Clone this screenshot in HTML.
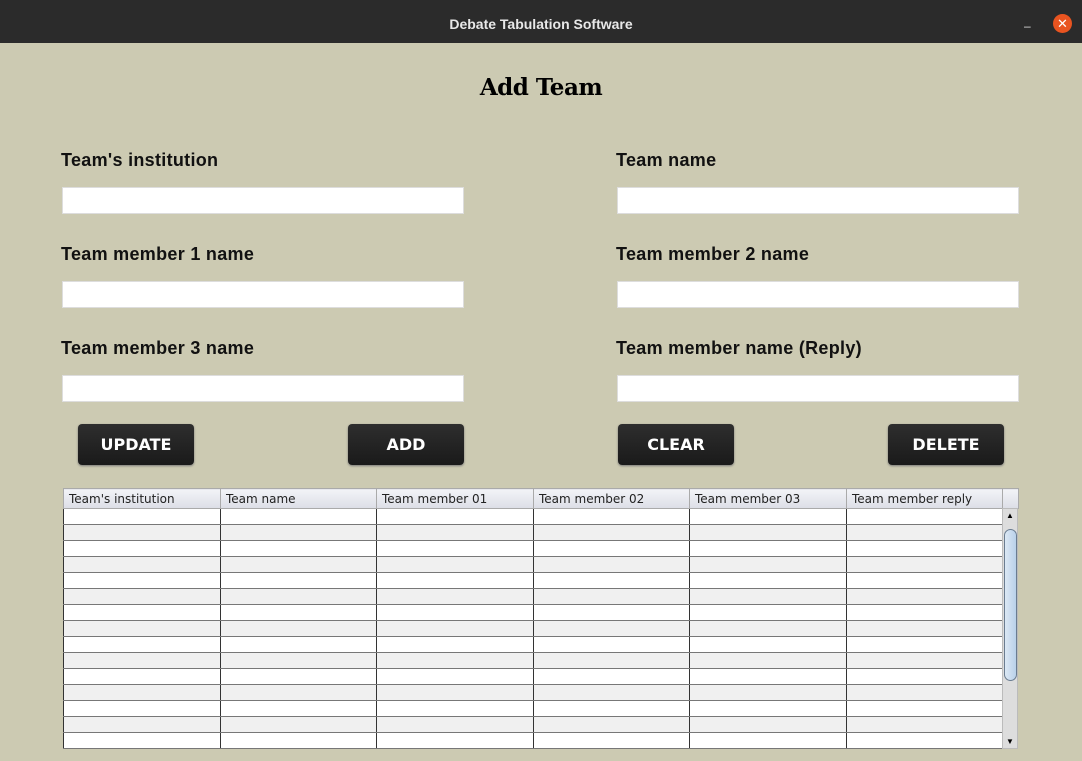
<!DOCTYPE html>
<html><head><meta charset="utf-8"><style>
*{margin:0;padding:0;box-sizing:border-box}
body{width:1082px;height:761px;background:#cccab2;font-family:"Liberation Sans",sans-serif;position:relative;overflow:hidden}
.bar{position:absolute;left:0;top:0;width:1082px;height:43px;background:#2b2b2b;color:#e8e8e8;font-weight:bold;font-size:14px;text-align:center;line-height:49px}
.x{position:absolute;left:1053px;top:14px;width:19px;height:19px;border-radius:50%;background:#e95420;color:#fff;font-size:13px;line-height:19px;text-align:center}
.min{position:absolute;left:1024px;top:19px;color:#ddd;font-size:12px}
h1{position:absolute;left:0;width:1082px;top:74px;text-align:center;font-family:"DejaVu Serif",serif;font-size:23px;font-weight:bold;letter-spacing:-0.5px}
.l{position:absolute;font-weight:bold;font-size:18px;color:#111;letter-spacing:0.3px}
.in{position:absolute;width:402px;height:27px;background:#fff;border:1px solid #ddd}
.b{position:absolute;width:116px;height:41px;top:424px;background:linear-gradient(#2e2e2e,#1a1a1a);border-radius:4px;color:#fff;font-weight:bold;font-size:16px;font-family:"DejaVu Sans",sans-serif;text-align:center;line-height:41px;box-shadow:0 1px 2px #777}
table{position:absolute;left:63px;top:488px;border-collapse:collapse;table-layout:fixed}
th{height:20px;background:linear-gradient(#f2f3f7,#dcdee6);font-weight:normal;font-size:12px;font-family:"DejaVu Sans",sans-serif;text-align:left;padding-left:5px;border:1px solid #aaa;color:#222;white-space:nowrap;overflow:hidden}
td{height:16px;border:1px solid #333;border-top-color:#777;border-bottom-color:#777;background:#fff}
tr:nth-child(odd) td{background:#f0f0f0}
.sb{position:absolute;left:1002px;top:508px;width:16px;height:241px;background:#ddd;border:1px solid #bbb}
.th{position:absolute;left:1px;top:20px;width:13px;height:152px;background:linear-gradient(90deg,#dce8f4,#b9d1ea);border:1px solid #6a7c90;border-radius:7px}
</style></head><body>
<div class="bar">Debate Tabulation Software</div>
<div class="min">–</div><div class="x">✕</div>
<h1>Add Team</h1>
<div class="l" style="left:61px;top:150px">Team's institution</div>
<div class="l" style="left:616px;top:150px">Team name</div>
<div class="l" style="left:61px;top:244px">Team member 1 name</div>
<div class="l" style="left:616px;top:244px">Team member 2 name</div>
<div class="l" style="left:61px;top:338px">Team member 3 name</div>
<div class="l" style="left:616px;top:338px">Team member name (Reply)</div>
<div class="in" style="left:62px;top:187px"></div>
<div class="in" style="left:617px;top:187px"></div>
<div class="in" style="left:62px;top:281px"></div>
<div class="in" style="left:617px;top:281px"></div>
<div class="in" style="left:62px;top:375px"></div>
<div class="in" style="left:617px;top:375px"></div>
<div class="b" style="left:78px">UPDATE</div>
<div class="b" style="left:348px">ADD</div>
<div class="b" style="left:618px">CLEAR</div>
<div class="b" style="left:888px">DELETE</div>
<table>
<colgroup><col style="width:157px"><col style="width:156px"><col style="width:157px"><col style="width:156px"><col style="width:157px"><col style="width:156px"><col style="width:16px"></colgroup>
<tr><th>Team's institution</th><th>Team name</th><th>Team member 01</th><th>Team member 02</th><th>Team member 03</th><th>Team member reply</th><th></th></tr>
<tr><td></td><td></td><td></td><td></td><td></td><td></td></tr>
<tr><td></td><td></td><td></td><td></td><td></td><td></td></tr>
<tr><td></td><td></td><td></td><td></td><td></td><td></td></tr>
<tr><td></td><td></td><td></td><td></td><td></td><td></td></tr>
<tr><td></td><td></td><td></td><td></td><td></td><td></td></tr>
<tr><td></td><td></td><td></td><td></td><td></td><td></td></tr>
<tr><td></td><td></td><td></td><td></td><td></td><td></td></tr>
<tr><td></td><td></td><td></td><td></td><td></td><td></td></tr>
<tr><td></td><td></td><td></td><td></td><td></td><td></td></tr>
<tr><td></td><td></td><td></td><td></td><td></td><td></td></tr>
<tr><td></td><td></td><td></td><td></td><td></td><td></td></tr>
<tr><td></td><td></td><td></td><td></td><td></td><td></td></tr>
<tr><td></td><td></td><td></td><td></td><td></td><td></td></tr>
<tr><td></td><td></td><td></td><td></td><td></td><td></td></tr>
<tr><td></td><td></td><td></td><td></td><td></td><td></td></tr>
</table>
<div class="sb"><div style="position:absolute;top:2px;left:3px;font-size:8px">▲</div><div class="th"></div><div style="position:absolute;bottom:2px;left:3px;font-size:8px">▼</div></div>
</body></html>
